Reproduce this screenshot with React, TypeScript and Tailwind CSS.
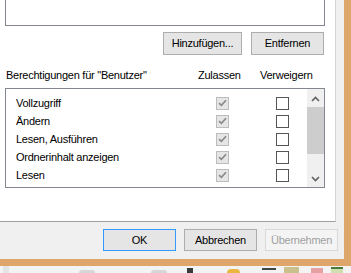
import React from "react";

const rows = ["Vollzugriff", "Ändern", "Lesen, Ausführen", "Ordnerinhalt anzeigen", "Lesen", ""];

function Check({ on }: { on: boolean }) {
  if (on) {
    return (
      <span className="flex h-[13px] w-[13px] items-center justify-center border border-[#bcbcbc] bg-[#e6e6e6]">
        <svg width="9" height="8" viewBox="0 0 9 8">
          <path d="M1 4.2 L3.4 6.4 L8 1.2" fill="none" stroke="#8a8a8a" strokeWidth="1.7" />
        </svg>
      </span>
    );
  }
  return <span className="block h-[13px] w-[13px] border border-[#555555] bg-white" />;
}

function Btn({ label, primary, disabled }: { label: string; primary?: boolean; disabled?: boolean }) {
  const border = primary ? "border-[#3399ff]" : disabled ? "border-[#d9d9d9]" : "border-[#adadad]";
  const bg = disabled ? "bg-[#f4f4f4]" : "bg-[#e5e5e5]";
  const color = disabled ? "text-[#a0a0a0]" : "text-black";
  return (
    <div className={`flex h-[22px] w-[73px] items-center justify-center border ${border} ${bg} ${color}`}>{label}</div>
  );
}

function Chevron({ up }: { up?: boolean }) {
  return (
    <svg width="9" height="6" viewBox="0 0 9 6">
      <path d={up ? "M1 5 L4.5 1.5 L8 5" : "M1 1 L4.5 4.5 L8 1"} fill="none" stroke="#606060" strokeWidth="1.6" />
    </svg>
  );
}

export default function App() {
  return (
    <div className="flex h-[273px] w-[351px] flex-col overflow-hidden bg-[#f3f3f3] font-['Liberation_Sans',Arial,sans-serif] text-[11px] leading-[13px] tracking-[-0.25px] text-black">
      <div className="flex h-[259px]">
        <div className="flex w-[344px] flex-col bg-[#f0f0f0]">
          <div className="h-[222px] w-[336px] border-r border-b border-r-[#d5d5d5] border-b-[#a0a0a0] bg-white">
            <div className="ml-[5px] h-[26px] w-[320px] border border-t-0 border-[#828790] bg-white" />

            <div className="mt-[6px] flex justify-end gap-[9px] pr-[11px]">
              <div className="flex h-[23px] w-[79px] items-center justify-center border border-[#adadad] bg-[#e5e5e5]">Hinzufügen...</div>
              <div className="flex h-[23px] w-[73px] items-center justify-center border border-[#adadad] bg-[#e5e5e5]">Entfernen</div>
            </div>

            <div className="mt-[13px] flex h-[15px] items-center pl-[6px] leading-[15px]">
              <span className="w-[192px]">Berechtigungen für "Benutzer"</span>
              <span className="w-[62px]">Zulassen</span>
              <span>Verweigern</span>
            </div>

            <div className="ml-[5px] mt-[5px] flex h-[100px] w-[320px] border border-[#828790] bg-white">
              <div className="flex-1 overflow-hidden pt-[5px]">
                {rows.map((r, i) => (
                  <div key={i} className="flex h-[18px] items-center">
                    <span className="w-[210px] pl-[10px]">{r}</span>
                    <Check on />
                    <span className="ml-[47px]">
                      <Check on={false} />
                    </span>
                  </div>
                ))}
              </div>
              <div className="flex w-[17px] flex-col bg-[#f0f0f0]">
                <div className="flex h-[18px] items-center justify-center pt-[2px]">
                  <Chevron up />
                </div>
                <div className="h-[47px] bg-[#cdcdcd]" />
                <div className="flex-1" />
                <div className="flex h-[17px] items-center justify-center">
                  <Chevron />
                </div>
              </div>
            </div>
          </div>

          <div className="flex flex-1 justify-end gap-[8px] pr-[6px] pt-[7px]">
            <Btn label="OK" primary />
            <Btn label="Abbrechen" />
            <Btn label="Übernehmen" disabled />
          </div>
        </div>
        <div className="w-[7px] bg-[#dfa66c]" />
      </div>
      <div className="h-[7px] bg-[#dfa66c]" />
      <div className="flex h-[7px] items-end">
        <span className="ml-[3px] h-[7px] w-[6px] bg-[#e4e4e4]" />
        <span className="ml-[70px] h-[3px] w-[16px] rounded-t bg-[#d6d6d6]" />
        <span className="ml-[56px] h-[3px] w-[16px] rounded-t bg-[#d6d6d6]" />
        <span className="ml-[20px] h-[5px] w-[6px] bg-[#3a3a3a]" />
        <span className="ml-[34px] h-[4px] w-[13px] rounded-t bg-[#e9b640]" />
        <span className="ml-[22px] h-[5px] w-[14px] border-t-2 border-[#444444]" />
        <span className="ml-[8px] h-[6px] w-[15px] bg-[#c9c08c]" />
        <span className="ml-[12px] h-[5px] w-[12px] bg-[#e6a0a4]" />
        <span className="ml-[8px] h-[6px] w-[12px] border-t-2 border-[#4a7a3a] bg-[#cfe0b0]" />
      </div>
    </div>
  );
}
